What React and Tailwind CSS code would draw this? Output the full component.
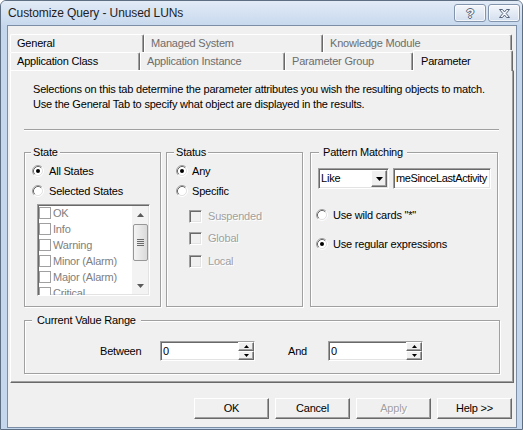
const SUNKEN =
  "border border-t-[#a0a0a0] border-l-[#a0a0a0] border-b-white border-r-white shadow-[inset_1px_1px_0_#696969,inset_-1px_-1px_0_#e3e3e3]";
const RAISED =
  "border border-t-white border-l-white border-b-[#696969] border-r-[#696969] shadow-[inset_-1px_-1px_0_#a0a0a0]";
const DISABLED = "text-[#a0a0a0] [text-shadow:1px_1px_0_#fff]";
const FIELDSET =
  "m-0 p-0 border border-[#a0a0a0] shadow-[inset_1px_1px_0_#fff,1px_1px_0_#fff]";
const LEGEND = "px-[2px] leading-[13px] bg-[#f0f0f0]";

const BACK_TABS = [
  { label: "General", w: "w-[134px]", on: true },
  { label: "Managed System", w: "w-[179px]" },
  { label: "Knowledge Module", w: "w-[189px]" },
];

const FRONT_TABS = [
  { label: "Application Class", w: "w-[130px]", on: true },
  { label: "Application Instance", w: "w-[145px]" },
  { label: "Parameter Group", w: "w-[128px]" },
];

const STATES = ["OK", "Info", "Warning", "Minor (Alarm)", "Major (Alarm)", "Critical"];

function Radio({ checked }) {
  return (
    <svg width="12" height="12" viewBox="0 0 12 12" className="shrink-0">
      <circle cx="6" cy="6" r="4.2" fill="#fff" />
      <path d="M2.11 9.89A5.5 5.5 0 0 1 9.89 2.11" fill="none" stroke="#a0a0a0" />
      <path d="M9.89 2.11A5.5 5.5 0 0 1 2.11 9.89" fill="none" stroke="#fff" />
      <path d="M2.82 9.18A4.5 4.5 0 0 1 9.18 2.82" fill="none" stroke="#696969" />
      <path d="M9.18 2.82A4.5 4.5 0 0 1 2.82 9.18" fill="none" stroke="#e3e3e3" />
      {checked && <circle cx="6" cy="6" r="2" fill="#000" />}
    </svg>
  );
}

function Arrow({ down, color = "#000", w = 7, h = 4 }) {
  return (
    <svg width={w} height={h} viewBox={`0 0 ${w} ${h}`} className="block">
      <path
        d={down ? `M0 0H${w}L${w / 2} ${h}Z` : `M0 ${h}H${w}L${w / 2} 0Z`}
        fill={color}
      />
    </svg>
  );
}

function Tab({ label, w, on }) {
  return (
    <div
      className={`${w} h-[18px] shrink-0 border border-b-0 border-t-white border-l-white border-r-[#696969] rounded-t-[2px] shadow-[inset_-1px_0_0_#a0a0a0] pl-[6px] flex items-center whitespace-nowrap ${
        on ? "text-black" : "text-[#6d6d6d]"
      }`}
    >
      {label}
    </div>
  );
}

function Spin() {
  return (
    <div className={`w-[95px] h-[20px] bg-white ${SUNKEN} flex`}>
      <span className="flex-1 pl-[2px] leading-[18px]">0</span>
      <div className="w-[16px] flex flex-col">
        <div className={`h-[9px] bg-[#f0f0f0] ${RAISED} flex items-center justify-center`}>
          <Arrow w={5} h={3} />
        </div>
        <div className={`h-[9px] bg-[#f0f0f0] ${RAISED} flex items-center justify-center`}>
          <Arrow down w={5} h={3} />
        </div>
      </div>
    </div>
  );
}

function Button({ children, disabled }) {
  return (
    <div
      className={`w-[75px] h-[21px] bg-[#f0f0f0] border border-t-white border-l-white border-b-[#696969] border-r-[#696969] shadow-[inset_-1px_-1px_0_#a0a0a0] flex items-center justify-center ${
        disabled ? DISABLED : ""
      }`}
    >
      {children}
    </div>
  );
}

function TitleButton({ children }) {
  return (
    <div className="w-[32px] h-[18px] rounded-[3px] border border-[#8395ad] bg-linear-to-b from-[#f4f7fb] to-[#d3dfee] shadow-[inset_0_0_0_1px_rgba(255,255,255,0.7)] flex items-center justify-center">
      {children}
    </div>
  );
}

export default function App() {
  return (
    <div className="w-[523px] h-[430px] font-['Liberation_Sans',Arial,sans-serif] text-[11px] tracking-[-0.2px] text-black bg-[#c5d7ed] border border-[#5f6f83] rounded-t-[6px] flex flex-col overflow-hidden select-none">
      {/* title bar */}
      <div className="h-[24px] shrink-0 flex items-start pl-[7px] pr-[2px] bg-linear-to-b from-[#e2ebf6] to-[#c8d9ee]">
        <span className="mt-[5px] text-[12px] tracking-[-0.1px] leading-[15px] text-[#1e1e1e]">
          Customize Query - Unused LUNs
        </span>
        <div className="ml-auto mt-[3px] flex gap-[2px]">
          <TitleButton>
            <span className="text-[13px] font-bold leading-none text-[#f4f7fb] [text-shadow:1px_0_#56657a,-1px_0_#56657a,0_1px_#56657a,0_-1px_#56657a]">
              ?
            </span>
          </TitleButton>
          <TitleButton>
            <svg width="13" height="11" viewBox="0 0 13 11">
              <path
                d="M1.5 1.5H4.5L6.5 4L8.5 1.5H11.5L8.2 5.5L11.5 9.5H8.5L6.5 7L4.5 9.5H1.5L4.8 5.5Z"
                fill="#f4f7fb"
                stroke="#56657a"
                strokeLinejoin="round"
              />
            </svg>
          </TitleButton>
        </div>
      </div>

      {/* client area */}
      <div className="ml-[6px] w-[510px] h-[403px] border border-[#7b8ea5] bg-[#f0f0f0] px-[2px] pt-[8px] flex flex-col">
        <div className="flex">
          {BACK_TABS.map((t) => (
            <Tab key={t.label} {...t} />
          ))}
        </div>
        <div className="flex items-start h-[18px]">
          {FRONT_TABS.map((t) => (
            <Tab key={t.label} {...t} />
          ))}
          <div className="relative z-10 w-[100px] h-[21px] -mt-[2px] shrink-0 border border-b-0 border-t-white border-l-white border-r-[#696969] rounded-t-[2px] shadow-[inset_-1px_0_0_#a0a0a0] bg-[#f0f0f0] pl-[7px] flex items-center">
            Parameter
          </div>
        </div>

        {/* tab page */}
        <div className="w-[504px] h-[313px] shrink-0 border border-t-white border-l-white border-b-[#696969] border-r-[#696969] shadow-[inset_-1px_-1px_0_#a0a0a0] flex flex-col">
          <div className="pl-[22px] pt-[11px] leading-[15px] whitespace-nowrap">
            <p>Selections on this tab determine the parameter attributes you wish the resulting objects to match.</p>
            <p>Use the General Tab to specify what object are displayed in the results.</p>
          </div>
          <div className="mt-[17px] ml-[13px] w-[475px] h-[2px] border-t border-t-[#a0a0a0] border-b border-b-white" />

          <div className="mt-[15px] ml-[13px] flex">
            {/* State */}
            <fieldset className={`${FIELDSET} w-[137px] h-[161px]`}>
              <legend className={`${LEGEND} ml-[6px]`}>State</legend>
              <div className="pl-[7px] pt-[4px]">
                <div className="h-[16px] flex items-center gap-[5px]">
                  <Radio checked />
                  All States
                </div>
                <div className="mt-[4px] h-[16px] flex items-center gap-[5px]">
                  <Radio />
                  Selected States
                </div>
                <div className={`mt-[5px] ml-[5px] w-[113px] h-[92px] bg-white ${SUNKEN} flex overflow-hidden`}>
                  <div className="flex-1 pl-[1px] text-[#808080] overflow-hidden">
                    {STATES.map((s) => (
                      <div key={s} className="h-[16px] flex items-center gap-[2px] whitespace-nowrap">
                        <span className="w-[12px] h-[12px] shrink-0 border border-[#a0a0a0] bg-white" />
                        {s}
                      </div>
                    ))}
                  </div>
                  <div className="w-[16px] mr-[1px] my-[1px] bg-[#f3f3f3] flex flex-col items-center">
                    <div className="h-[18px] flex items-center">
                      <Arrow color="#5a5a5a" />
                    </div>
                    <div className="w-[15px] h-[37px] rounded-[2px] border border-[#979797] bg-linear-to-r from-[#f4f4f4] to-[#dadada] flex flex-col items-center justify-center gap-[1px]">
                      <span className="w-[7px] h-[1px] bg-[#6a6a6a]" />
                      <span className="w-[7px] h-[1px] bg-[#6a6a6a]" />
                      <span className="w-[7px] h-[1px] bg-[#6a6a6a]" />
                      <span className="w-[7px] h-[1px] bg-[#6a6a6a]" />
                    </div>
                    <div className="mt-auto h-[16px] flex items-center">
                      <Arrow down color="#5a5a5a" />
                    </div>
                  </div>
                </div>
              </div>
            </fieldset>

            {/* Status */}
            <fieldset className={`${FIELDSET} ml-[5px] w-[137px] h-[161px]`}>
              <legend className={`${LEGEND} ml-[7px]`}>Status</legend>
              <div className="pl-[9px] pt-[4px]">
                <div className="h-[16px] flex items-center gap-[4px]">
                  <Radio checked />
                  Any
                </div>
                <div className="mt-[4px] h-[16px] flex items-center gap-[4px]">
                  <Radio />
                  Specific
                </div>
                {["Suspended", "Global", "Local"].map((s, i) => (
                  <div
                    key={s}
                    className={`${i === 0 ? "mt-[11px]" : i === 1 ? "mt-[9px]" : "mt-[10px]"} ml-[13px] h-[13px] flex items-center gap-[6px] ${DISABLED}`}
                  >
                    <span className={`w-[13px] h-[13px] shrink-0 bg-[#f0f0f0] ${SUNKEN}`} />
                    {s}
                  </div>
                ))}
              </div>
            </fieldset>

            {/* Pattern Matching */}
            <fieldset className={`${FIELDSET} ml-[7px] w-[188px] h-[161px]`}>
              <legend className={`${LEGEND} ml-[8px] px-[4px]`}>Pattern Matching</legend>
              <div className="pl-[5px]">
                <div className="mt-[9px] ml-[2px] flex gap-[4px]">
                  <div className={`w-[71px] h-[21px] bg-white ${SUNKEN} flex p-[1px]`}>
                    <span className="flex-1 pl-[1px] flex items-center">Like</span>
                    <div className={`w-[16px] bg-[#f0f0f0] ${RAISED} flex items-center justify-center`}>
                      <Arrow down />
                    </div>
                  </div>
                  <div className={`w-[98px] h-[21px] bg-white ${SUNKEN} pl-[2px] flex items-center overflow-hidden whitespace-nowrap tracking-[-0.4px]`}>
                    meSinceLastActivity
                  </div>
                </div>
                <div className="mt-[18px] h-[16px] flex items-center gap-[5px]">
                  <Radio />
                  Use wild cards "*"
                </div>
                <div className="mt-[13px] h-[16px] flex items-center gap-[5px]">
                  <Radio checked />
                  Use regular expressions
                </div>
              </div>
            </fieldset>
          </div>

          {/* Current Value Range */}
          <fieldset className={`${FIELDSET} mt-[7px] ml-[13px] w-[476px] h-[60px]`}>
            <legend className={`${LEGEND} ml-[7px] px-[5px]`}>Current Value Range</legend>
            <div className="mt-[14px] pl-[75px] h-[20px] flex items-center">
              <span className="w-[60px]">Between</span>
              <Spin />
              <span className="ml-[33px] w-[40px]">And</span>
              <Spin />
            </div>
          </fieldset>
        </div>

        {/* dialog buttons */}
        <div className="mt-[15px] pr-[2px] flex justify-end gap-[6px]">
          <Button>OK</Button>
          <Button>Cancel</Button>
          <Button disabled>Apply</Button>
          <Button>Help &gt;&gt;</Button>
        </div>
      </div>
    </div>
  );
}
